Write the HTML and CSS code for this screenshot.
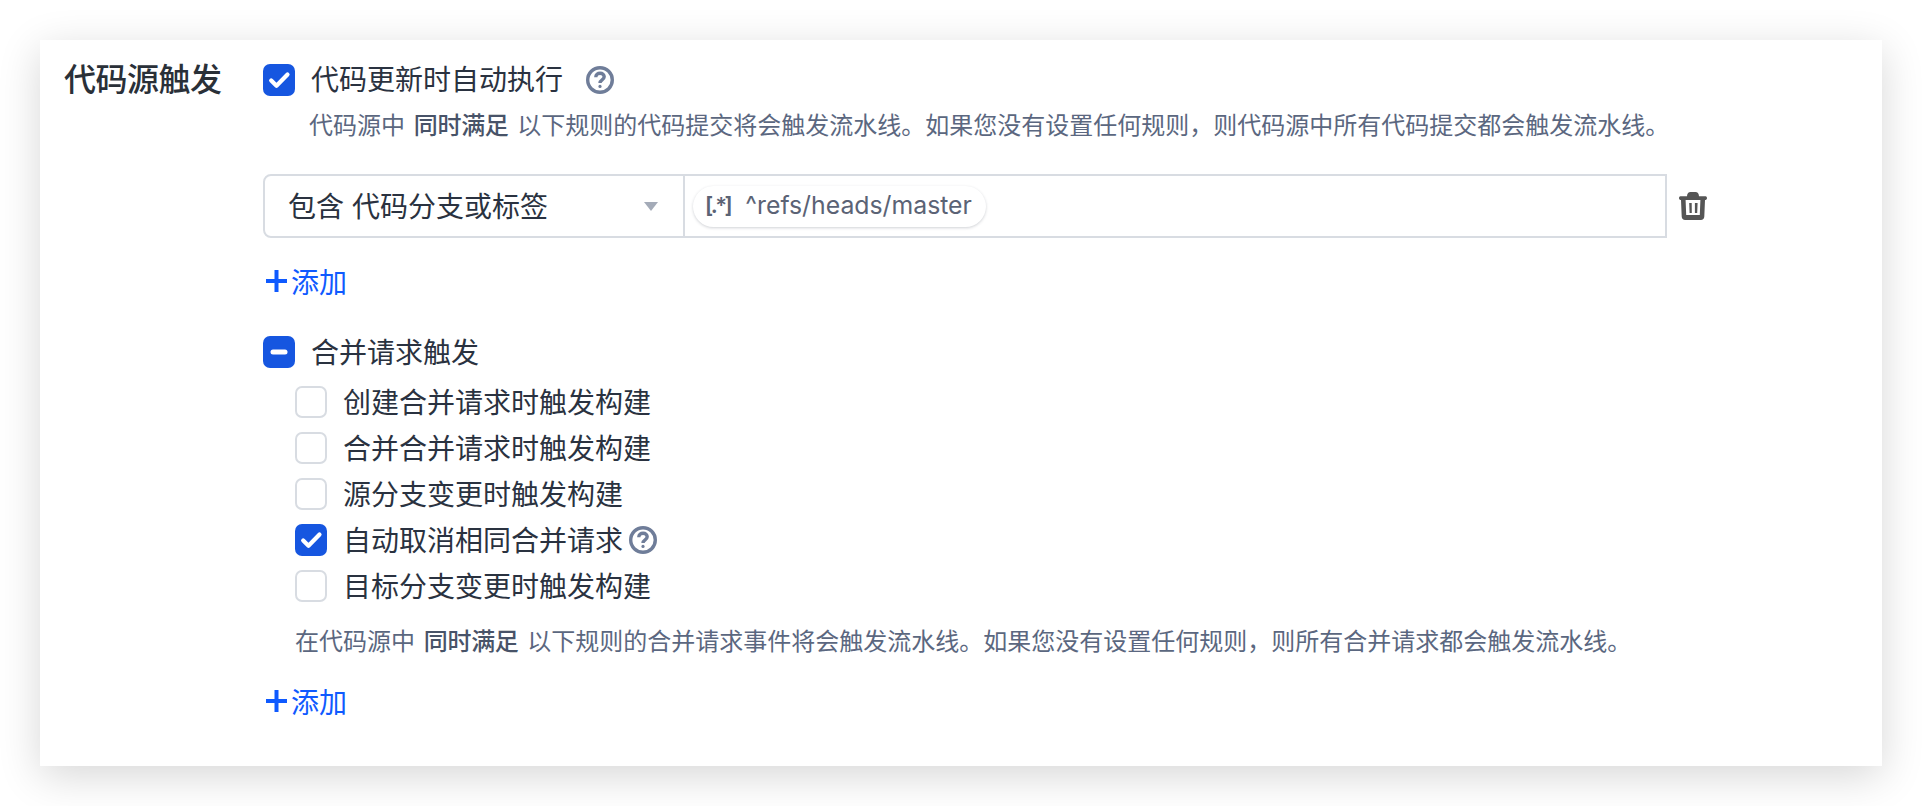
FILE: index.html
```html
<!DOCTYPE html>
<html lang="zh-CN">
<head>
<meta charset="utf-8">
<title>代码源触发</title>
<link rel="stylesheet" href="styles.css">
</head>
<body>
<main class="card">
  <div class="section-label">代码源触发</div>
  <div class="section-body">
    <div class="check-row">
      <span class="box on"><svg viewBox="0 0 32 32"><path d="M8.200 16.500l5.300 5.300L24.500 10.500" /></svg></span>
      <span class="check-text">代码更新时自动执行</span>
      <svg class="help help-top" viewBox="0 0 28 28"><circle cx="14" cy="14" r="12.300" /><path d="M9.800 11.200c0-2.500 1.900-4 4.300-4s4.100 1.500 4.100 3.600c0 3-4.200 3-4.200 6.100" /><rect class="dot" x="12.400" y="18.800" width="3.200" height="3.200" rx="1.600" /></svg>
    </div>
    <p class="hint hint-top">代码源中 <b>同时满足</b> 以下规则的代码提交将会触发流水线。如果您没有设置任何规则，则代码源中所有代码提交都会触发流水线。</p>

    <div class="rule-row">
      <div class="rule">
        <div class="select">
          <span class="select-text">包含 代码分支或标签</span>
          <i class="caret"></i>
        </div>
        <div class="rule-value">
          <span class="tag"><span class="tag-icon">[.*]</span><span class="tag-text">^refs/heads/master</span></span>
        </div>
      </div>
      <svg class="trash" viewBox="0 0 28 28"><path d="M8 4.200C8 1.600 9.600 0 11.500 0h5C18.400 0 20 1.600 20 4.200h6.600c.8 0 1.400.8 1.400 1.900S27.400 8 26.600 8H1.400C.6 8 0 7.200 0 6.100s.6-1.900 1.400-1.900z" /><path d="M2 8h4.600l.6 15h13.600l.6-15H26l-.7 16.500c-.1 2.100-1.400 3.500-3.400 3.500H6.100c-2 0-3.300-1.400-3.400-3.500z" /><path d="M10.200 11h2.500l.1 10h-2.200zM15.900 11h2.700l-.4 10h-2.300z" /></svg>
    </div>

    <a class="add add-first"><svg viewBox="0 0 21 22"><path d="M10.500 0v22M0 11h21" /></svg>添加</a>

    <div class="check-row merge">
      <span class="box on"><svg viewBox="0 0 32 32"><path class="dash" d="M10 16h12" /></svg></span>
      <span class="check-text merge-text">合并请求触发</span>
    </div>

    <ul class="sub-list">
      <li class="sub-row"><span class="box"></span><span class="sub-text">创建合并请求时触发构建</span></li>
      <li class="sub-row"><span class="box"></span><span class="sub-text">合并合并请求时触发构建</span></li>
      <li class="sub-row"><span class="box"></span><span class="sub-text">源分支变更时触发构建</span></li>
      <li class="sub-row"><span class="box on"><svg viewBox="0 0 32 32"><path d="M8.200 16.500l5.300 5.300L24.500 10.500" /></svg></span><span class="sub-text">自动取消相同合并请求</span>
        <svg class="help help-sub" viewBox="0 0 28 28"><circle cx="14" cy="14" r="12.300" /><path d="M9.800 11.200c0-2.500 1.900-4 4.300-4s4.100 1.500 4.100 3.600c0 3-4.200 3-4.200 6.100" /><rect class="dot" x="12.400" y="18.800" width="3.200" height="3.200" rx="1.600" /></svg>
      </li>
      <li class="sub-row"><span class="box"></span><span class="sub-text">目标分支变更时触发构建</span></li>
    </ul>

    <p class="hint hint-merge">在代码源中 <b>同时满足</b> 以下规则的合并请求事件将会触发流水线。如果您没有设置任何规则，则所有合并请求都会触发流水线。</p>

    <a class="add add-last"><svg viewBox="0 0 21 22"><path d="M10.500 0v22M0 11h21" /></svg>添加</a>
  </div>
</main>
</body>
</html>
```
FILE: styles.css
```css
* { box-sizing: border-box; }
html, body { margin: 0; height: 806px; overflow: hidden; background: #fff; }
body {
  padding: 40px;
  font-family: "Inter", "Noto Sans CJK SC", sans-serif;
  color: #2a3240;
}
.card {
  display: flex;
  height: 726px;
  padding: 24px 24px 0;
  background: #fff;
  box-shadow: 0 10px 40px rgba(0, 0, 0, .16);
}
.section-label {
  width: 199px;
  flex: none;
  font-size: 32px;
  line-height: 32px;
  font-weight: 500;
  letter-spacing: -.5px;
  color: #2a3038;
}
.section-body { flex: 1; min-width: 0; }

.check-row { display: flex; align-items: center; height: 32px; font-size: 28px; }
.check-text { margin-left: 16px; line-height: 32px; }
.merge-text { padding-top: 2px; }

.box {
  flex: none;
  display: block;
  width: 32px;
  height: 32px;
  border: 2px solid #d8dce2;
  border-radius: 7px;
  background: #fff;
}
.box.on { border: 0; background: #1656e0; }
.box svg { display: block; width: 32px; height: 32px; }
.box path { fill: none; stroke: #fff; stroke-width: 4.2; stroke-linecap: round; stroke-linejoin: round; }
.box path.dash { stroke-width: 5; }

.help { flex: none; width: 28px; height: 28px; }
.help circle, .help path { fill: none; stroke: #6f7d99; stroke-width: 3.4; }
.help .dot { fill: #6f7d99; }
.help-top { margin-left: 23px; }

.hint { margin: 0; font-size: 24px; line-height: 36px; color: #5b6780; word-spacing: 2px; }
.hint b { font-weight: 500; color: #485368; letter-spacing: -.3px; }
.hint-top { margin-top: 12px; margin-left: 46px; }
.hint-merge { margin-top: 22px; margin-left: 32px; }

.rule-row { display: flex; align-items: center; margin-top: 30px; }
.rule {
  display: flex;
  width: 1404px;
  height: 64px;
  border: 2px solid #d8dce2;
  border-radius: 8px 0 0 8px;
}
.select {
  display: flex;
  align-items: center;
  justify-content: space-between;
  width: 420px;
  padding: 0 25px 0 23px;
  border-right: 2px solid #d8dce2;
  font-size: 28px;
}
.select-text { padding-bottom: 2px; }
.caret {
  width: 0;
  height: 0;
  border-left: 7px solid transparent;
  border-right: 7px solid transparent;
  border-top: 9px solid #a4abb8;
}
.rule-value { display: flex; align-items: center; padding-left: 8px; }
.tag {
  display: flex;
  align-items: center;
  height: 41px;
  padding: 0 14px 3px 12px;
  border-radius: 21px;
  background: #fff;
  box-shadow: 0 1px 3px rgba(40, 50, 70, .22);
  font-size: 24.8px;
  color: #5b6375;
}
.tag-icon { font-size: 22px; font-weight: 600; letter-spacing: -2.5px; }
.tag-text { margin-left: 15px; }
.trash { flex: none; width: 28px; height: 28px; margin-left: 12px; }
.trash path { fill: #555; }

.add {
  display: flex;
  align-items: center;
  height: 40px;
  margin-left: 3px;
  padding-top: 2px;
  font-size: 28px;
  line-height: 40px;
  color: #0f5aff;
}
.add svg { width: 21px; height: 22px; margin: 0 4px 4px 0; }
.add path { fill: none; stroke: #0f5aff; stroke-width: 4; }
.add-first { margin-top: 24px; }
.add-last { margin-top: 22px; }

.merge { margin-top: 34px; }
.sub-list { list-style: none; margin: 18px 0 0 32px; padding: 0; font-size: 28px; }
.sub-row { display: flex; align-items: center; height: 32px; margin-bottom: 14px; }
.sub-row:last-child { margin-bottom: 0; }
.sub-text { margin-left: 16px; padding-bottom: 2px; }
.help-sub { margin-left: 6px; }
```
